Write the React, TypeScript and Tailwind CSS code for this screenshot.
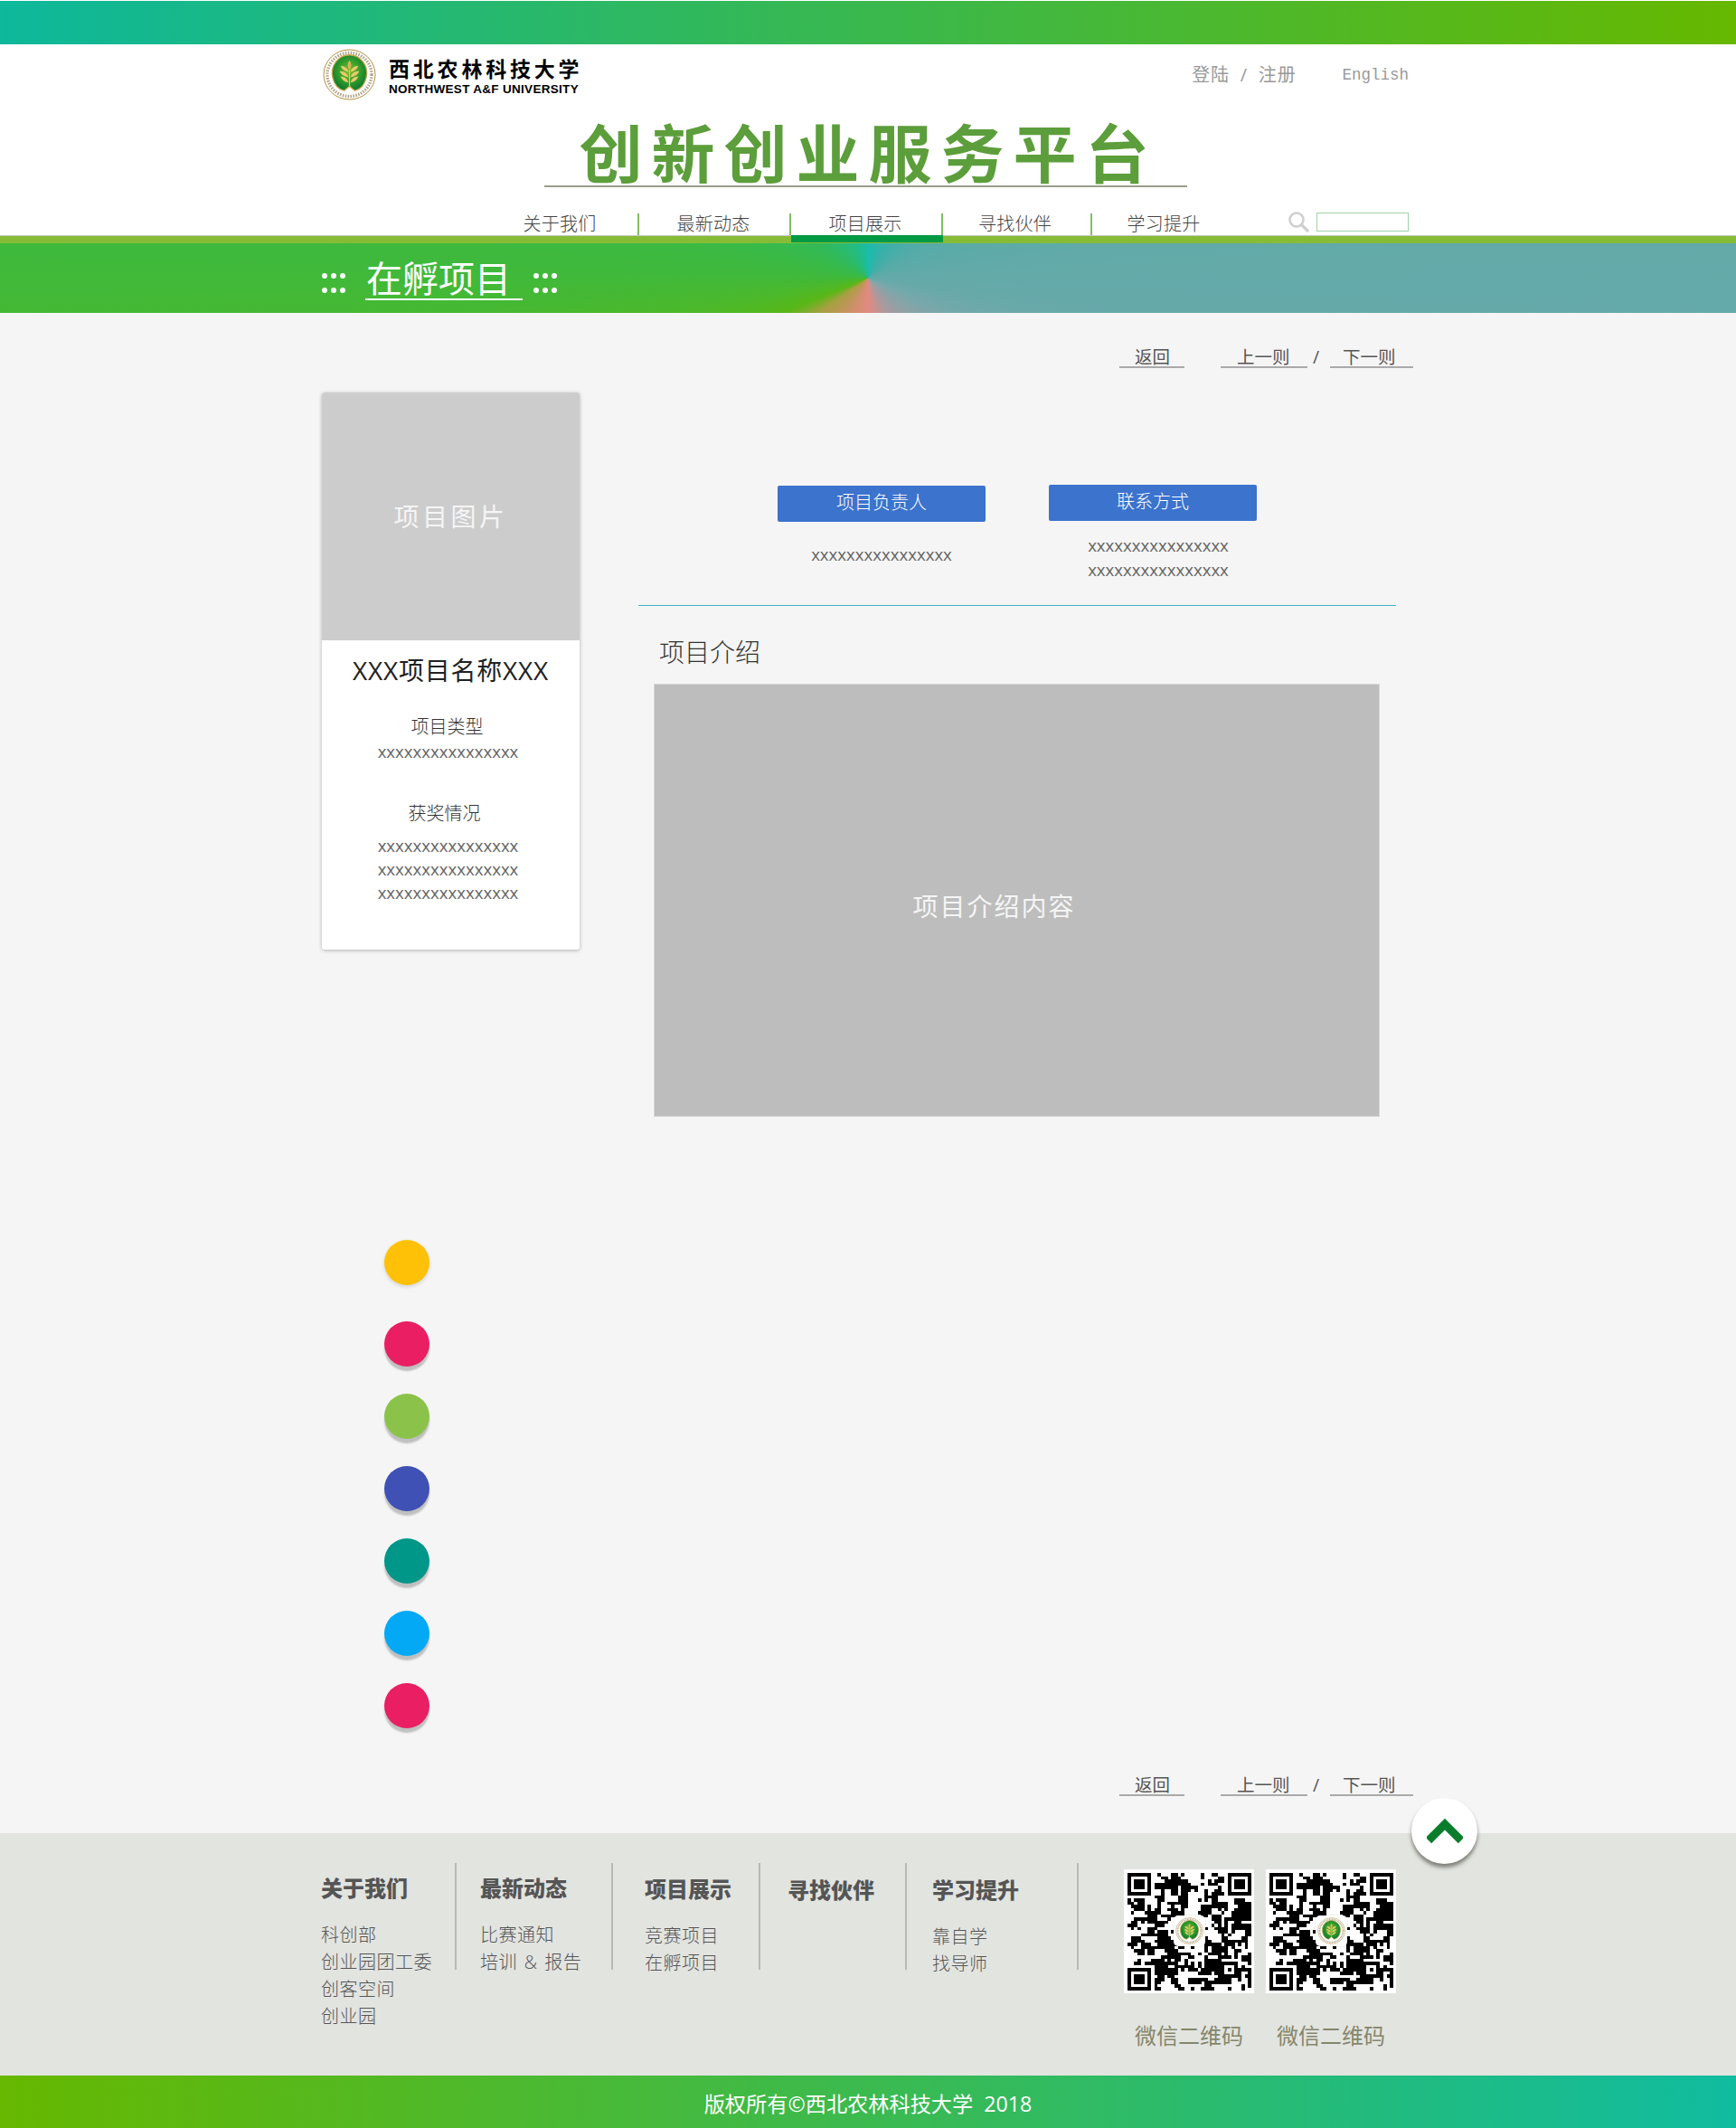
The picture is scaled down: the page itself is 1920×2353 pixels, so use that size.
import React from "react";

const pageFont = "[font-family:'Open_Sans','Noto_Sans_CJK_SC',sans-serif]";

const navItems = [
  { label: "关于我们", width: "w-[168px]", shift: "pr-[6px]" },
  { label: "最新动态", width: "w-[168px]", shift: "pr-[2px]" },
  { label: "项目展示", width: "w-[168px]", shift: "pr-[2px]", active: true },
  { label: "寻找伙伴", width: "w-[165px]", shift: "pr-[4px]" },
  { label: "学习提升", width: "w-[160px]", shift: "pr-[2px]" },
];

const footerColumns = [
  { title: "关于我们", box: "w-[150px]", head: "mt-[14px]", links: ["科创部", "创业园团工委", "创客空间", "创业园"] },
  { title: "最新动态", box: "w-[173px] pl-[26px]", head: "mt-[14px]", links: ["比赛通知", "培训 & 报告"] },
  { title: "项目展示", box: "w-[163px] pl-[35px]", head: "mt-[15px]", links: ["竞赛项目", "在孵项目"] },
  { title: "寻找伙伴", box: "w-[162px] pl-[30px]", head: "mt-[16px]", links: [] },
  { title: "学习提升", box: "w-[190px] pl-[28px]", head: "mt-[16px]", links: ["靠自学", "找导师"] },
];

const dots = [
  { color: "bg-[#ffc107]", cls: "shadow-[0_2px_4px_rgba(0,0,0,0.14)]" },
  { color: "bg-[#e91e63]", cls: "mt-[40px] shadow-[0_5px_2px_rgba(0,0,0,0.22)]" },
  { color: "bg-[#8bc34a]", cls: "mt-[30px] shadow-[0_5px_2px_rgba(0,0,0,0.22)]" },
  { color: "bg-[#3f51b5]", cls: "mt-[30px] shadow-[0_5px_2px_rgba(0,0,0,0.22)]" },
  { color: "bg-[#009688]", cls: "mt-[30px] shadow-[0_5px_2px_rgba(0,0,0,0.22)]" },
  { color: "bg-[#03a9f4]", cls: "mt-[30px] shadow-[0_5px_2px_rgba(0,0,0,0.22)]" },
  { color: "bg-[#e91e63]", cls: "mt-[30px] shadow-[0_5px_2px_rgba(0,0,0,0.22)]" },
];

// school crest, drawn small
function Crest({ className }: { className: string }) {
  return (
    <svg viewBox="0 0 60 58" className={className}>
      <defs>
        <radialGradient id="crestGreen" cx="50%" cy="45%" r="55%">
          <stop offset="0%" stopColor="#7fbf2a" />
          <stop offset="60%" stopColor="#2f9a2c" />
          <stop offset="100%" stopColor="#0d7a2e" />
        </radialGradient>
      </defs>
      <ellipse cx="30" cy="29" rx="29" ry="28" fill="#fff" stroke="#b08d3c" strokeWidth="1" />
      <ellipse cx="30" cy="29" rx="25" ry="24.5" fill="none" stroke="#6b5a2a" strokeWidth="3.4" strokeDasharray="1.6 1.4" opacity="0.55" />
      <path d="M11 32 A19.5 20.5 0 1 1 49 32 Q46 45 36 47 L30 42 L24 47 Q14 45 11 32Z" fill="url(#crestGreen)" stroke="#c7a64a" strokeWidth="1.4" />
      <path d="M30 13 Q34 18 30 24 Q26 18 30 13Z" fill="#d9b45a" />
      <g fill="#e9c96c">
        <path d="M29 26 Q22 25 20 19 Q27 19 29 26Z" />
        <path d="M31 26 Q38 25 40 19 Q33 19 31 26Z" />
        <path d="M29 32 Q21 31 19 25 Q27 25 29 32Z" />
        <path d="M31 32 Q39 31 41 25 Q33 25 31 32Z" />
        <path d="M29 38 Q22 37 20 31 Q27 31 29 38Z" />
        <path d="M31 38 Q38 37 40 31 Q33 31 31 38Z" />
      </g>
      <path d="M30 24 L30 42" stroke="#e9c96c" strokeWidth="1.2" />
    </svg>
  );
}

// not the real code, only looks like it
function buildQr() {
  const size = 37;
  const cells: boolean[][] = [];
  let seed = 20180;
  const next = () => {
    seed = (seed * 1103515245 + 12345) & 0x7fffffff;
    return (seed >> 16) & 15;
  };
  for (let y = 0; y < size; y++) {
    const row: boolean[] = [];
    for (let x = 0; x < size; x++) {
      const left = x > 0 ? row[x - 1] : false;
      const up = y > 0 ? cells[y - 1][x] : false;
      // neighbours pull the cell along, so it clumps into runs
      const chance = 5 + (left ? 4 : 0) + (up ? 3 : 0);
      row.push(next() < chance);
    }
    cells.push(row);
  }
  const finder = (ox: number, oy: number) => {
    for (let y = -1; y < 8; y++) {
      for (let x = -1; x < 8; x++) {
        const cx = ox + x;
        const cy = oy + y;
        if (cx < 0 || cy < 0 || cx >= size || cy >= size) continue;
        const edge = x === 0 || x === 6 || y === 0 || y === 6;
        const core = x >= 2 && x <= 4 && y >= 2 && y <= 4;
        const inside = x >= 0 && x <= 6 && y >= 0 && y <= 6;
        cells[cy][cx] = inside && (edge || core);
      }
    }
  };
  finder(0, 0);
  finder(30, 0);
  finder(0, 30);
  for (let y = 0; y < 5; y++) {
    for (let x = 0; x < 5; x++) {
      cells[28 + y][28 + x] = x === 0 || x === 4 || y === 0 || y === 4 || (x === 2 && y === 2);
    }
  }
  return cells;
}

const qrCells = buildQr();

function QrCode() {
  return (
    <div className="relative w-[144px] h-[137px] bg-white flex items-center justify-center">
      <svg viewBox="0 0 37 37" shapeRendering="crispEdges" className="w-[137px] h-[130px]" preserveAspectRatio="none">
        {qrCells.map((row, y) =>
          row.map((on, x) => (on ? <rect key={`${x}-${y}`} x={x} y={y} width="1.02" height="1.02" fill="#000" /> : null))
        )}
      </svg>
      <div className="absolute left-[55px] top-[51px] w-[35px] h-[34px] bg-white rounded-[5px] flex items-center justify-center shadow-[0_0_2px_rgba(0,0,0,0.2)]">
        <Crest className="w-[31px] h-[30px]" />
      </div>
    </div>
  );
}

function Pager({ className }: { className: string }) {
  return (
    <div className={`flex items-start text-[19.5px] leading-[20px] text-[#555] ${className}`}>
      <a className="w-[72px] h-[22px] text-center pl-[1px] border-b-[2px] border-[#aaa]">返回</a>
      <a className="ml-[40px] w-[96px] h-[22px] pl-[18px] border-b-[2px] border-[#aaa]">上一则</a>
      <span className="ml-[6px] w-[19px]">/</span>
      <a className="w-[92px] h-[22px] pl-[14px] border-b-[2px] border-[#aaa]">下一则</a>
    </div>
  );
}

function DotGrid() {
  return (
    <div className="mt-[10px] grid grid-cols-3 gap-x-[4px] gap-y-[10px]">
      {[0, 1, 2, 3, 4, 5].map((i) => (
        <span key={i} className="w-[6px] h-[6px] rounded-full bg-white" />
      ))}
    </div>
  );
}

export default function App() {
  return (
    <div className={`w-[1920px] h-[2353px] bg-[#f5f5f5] flex flex-col overflow-hidden ${pageFont}`}>
      <div className="h-[1px] bg-white" />
      <div className="h-[48px] bg-linear-to-r/srgb from-[#0db89b] to-[#66b800]" />

      <header className="h-[212px] bg-white border-b border-[#c8c8c8] flex flex-col">
        <div className="flex pl-[357px] pr-[362px] pt-[5px] h-[62px]">
          <Crest className="w-[59px] h-[57px]" />
          <div className="ml-[14px] pt-[8px] w-[216px]">
            <div className="text-[23px] leading-[28px] tracking-[3.8px] font-bold text-black whitespace-nowrap">西北农林科技大学</div>
            <div className="mt-[2px] text-[13.5px] leading-[14px] font-bold tracking-[0.3px] text-black whitespace-nowrap [font-family:'Liberation_Sans',sans-serif]">
              NORTHWEST A&amp;F UNIVERSITY
            </div>
          </div>
          <div className="ml-auto pt-[16px] flex text-[20px] leading-[26px] text-[#999]">
            <span className="tracking-[0.8px]">登陆 &nbsp;/&nbsp; 注册</span>
            <span className="ml-[51px] text-[17.5px] [font-family:'Liberation_Mono',monospace]">English</span>
          </div>
        </div>

        <div className="ml-[602px] mt-[31px] w-[711px] h-[65px] border-b-[2px] border-[#999e8c] text-center">
          <div className="pl-[6px] text-[70px] leading-[56px] font-bold tracking-[10px] text-[#5c9e3b] whitespace-nowrap">创新创业服务平台</div>
        </div>

        <div className="mt-[29px] pl-[539px] pr-[362px] flex items-start h-[24px]">
          {navItems.map((item, i) => (
            <div
              key={item.label}
              className={`relative ${item.width} ${item.shift} h-[24px] text-center text-[20px] tracking-[0.3px] leading-[24px] text-[#444] font-light ${
                i < 4 ? "border-r-[2px] border-[#7fbf5f]" : "border-r-0"
              }`}
            >
              {item.label}
              {item.active && <span className="absolute left-0 right-[-2px] top-[24px] h-[8px] bg-[#009944]" />}
            </div>
          ))}
          <svg viewBox="0 0 24 24" className="ml-auto w-[24px] h-[24px] -mt-[3px]" fill="none" stroke="#cfcfcf" strokeWidth="2.6" strokeLinecap="round">
            <circle cx="10" cy="10" r="7.5" />
            <path d="M15.5 15.5L22 22" strokeWidth="3.4" />
          </svg>
          <input className="ml-[8px] w-[102px] h-[21px] -mt-[1px] border border-[#9fd3a9] bg-white" />
        </div>
      </header>

      <div className="h-[8px] bg-[#86bc35]" />

      <div className="h-[77px] pl-[356px] flex items-center bg-[conic-gradient(from_0deg_at_50%_50%,#1abcaa_0deg,#3ab0a8_30deg,#55aba8_60deg,#62aaa9_85deg,#68a9aa_100deg,#78a8ab_115deg,#a89a9f_150deg,#e38a80_180deg,#cf8f6c_205deg,#a8a040_235deg,#58b718_248deg,#3fb93c_272deg,#33ba55_300deg,#22bc85_340deg,#1abcaa_360deg)]">
        <DotGrid />
        <div className="ml-[22px] self-start w-[174px] h-[63px] border-b-[2px] border-white pl-[1px] text-[40px] leading-[77px] text-white whitespace-nowrap">
          在孵项目
        </div>
        <div className="ml-[12px]">
          <DotGrid />
        </div>
      </div>

      <main className="h-[1681px] pl-[356px] relative">
        <Pager className="ml-[882px] mt-[39px]" />

        <div className="mt-[27px] flex items-start">
          <section className="w-[285px] h-[616px] bg-white rounded-[3px] overflow-hidden shadow-[0_1px_4px_rgba(0,0,0,0.28)] text-center">
            <div className="h-[274px] bg-[#cccccc] flex items-center justify-center text-[28px] tracking-[3.5px] text-[#f5f5f5]">项目图片</div>
            <div className="mt-[15px] text-[28px] leading-[36px] tracking-[0.8px] text-[#222]">XXX项目名称XXX</div>
            <div className="pr-[6px]">
              <div className="mt-[32px] pr-[2px] text-[20px] leading-[26px] text-[#333] font-light">项目类型</div>
              <div className="mt-[2px] text-[18.6px] leading-[24px] text-[#666]">xxxxxxxxxxxxxxxx</div>
              <div className="mt-[44px] text-[20px] leading-[26px] text-[#333] font-light pr-[8px]">获奖情况</div>
              <div className="mt-[9px] text-[18.6px] leading-[26px] text-[#666]">
                <div>xxxxxxxxxxxxxxxx</div>
                <div>xxxxxxxxxxxxxxxx</div>
                <div>xxxxxxxxxxxxxxxx</div>
              </div>
            </div>
          </section>

          <section className="ml-[65px] w-[838px]">
            <div className="flex h-[236px] border-b border-[#3fb4c8]">
              <div className="ml-[154px] mt-[103px] w-[230px] text-center">
                <div className="h-[40px] bg-[#3b73cd] rounded-[2px] text-[20px] leading-[38px] text-white font-light">项目负责人</div>
                <div className="mt-[23px] text-[18.6px] leading-[26px] text-[#666]">xxxxxxxxxxxxxxxx</div>
              </div>
              <div className="ml-[70px] mt-[102px] w-[230px] text-center">
                <div className="h-[40px] bg-[#3b73cd] rounded-[2px] text-[20px] leading-[38px] text-white font-light">联系方式</div>
                <div className="mt-[13px] ml-[12px] text-[18.6px] leading-[27px] text-[#666]">
                  <div>xxxxxxxxxxxxxxxx</div>
                  <div>xxxxxxxxxxxxxxxx</div>
                </div>
              </div>
            </div>
            <h2 className="mt-[33px] ml-[23px] text-[28px] leading-[36px] text-[#333] font-light">项目介绍</h2>
            <div className="mt-[17px] ml-[17px] w-[803px] h-[479px] bg-[#bdbdbd] border border-[#d8d8d8] flex items-center justify-center pr-[50px] pt-[12px] text-[28px] tracking-[2px] text-[#f5f5f5]">
              项目介绍内容
            </div>
          </section>
        </div>

        <div className="ml-[69px] mt-[136px] flex flex-col w-[50px]">
          {dots.map((dot, i) => (
            <span key={i} className={`w-[50px] h-[50px] rounded-full ${dot.color} ${dot.cls}`} />
          ))}
        </div>

        <Pager className="ml-[882px] mt-[53px]" />

        <button className="absolute left-[1561px] top-[1642px] w-[73px] h-[73px] rounded-full bg-white shadow-[0_4px_4px_rgba(60,60,50,0.6)] flex items-center justify-center">
          <svg viewBox="0 0 40 30" className="w-[40px] h-[30px]" fill="none" stroke="#0a7d2c" strokeWidth="9">
            <path d="M2 25L20 7L38 25" />
          </svg>
        </button>
      </main>

      <footer className="h-[268px] bg-[#e2e4e0] pl-[355px] pt-[33px] flex items-start">
        {footerColumns.map((col) => (
          <div key={col.title} className={`${col.box} h-[118px] border-r-[2px] border-[#b8b8b8]`}>
            <div className={`${col.head} text-[24px] leading-[28px] font-black text-[#555] whitespace-nowrap`}>{col.title}</div>
            <div className="mt-[23px] text-[20px] tracking-[0.5px] [word-spacing:2px] leading-[30px] text-[#555] font-light whitespace-nowrap">
              {col.links.map((link) => (
                <div key={link}>{link}</div>
              ))}
            </div>
          </div>
        ))}
        <div className="ml-[50px] mt-[7px] flex gap-[13px]">
          {[0, 1].map((i) => (
            <div key={i} className="w-[144px] text-center">
              <QrCode />
              <div className="mt-[31px] text-[24px] leading-[32px] text-[#85866a]">微信二维码</div>
            </div>
          ))}
        </div>
      </footer>

      <div className="h-[58px] pt-[4px] bg-linear-to-r/srgb from-[#66b800] to-[#10bc9f] flex items-center justify-center text-[23.2px] text-white whitespace-pre">
        版权所有©西北农林科技大学  2018
      </div>
    </div>
  );
}
